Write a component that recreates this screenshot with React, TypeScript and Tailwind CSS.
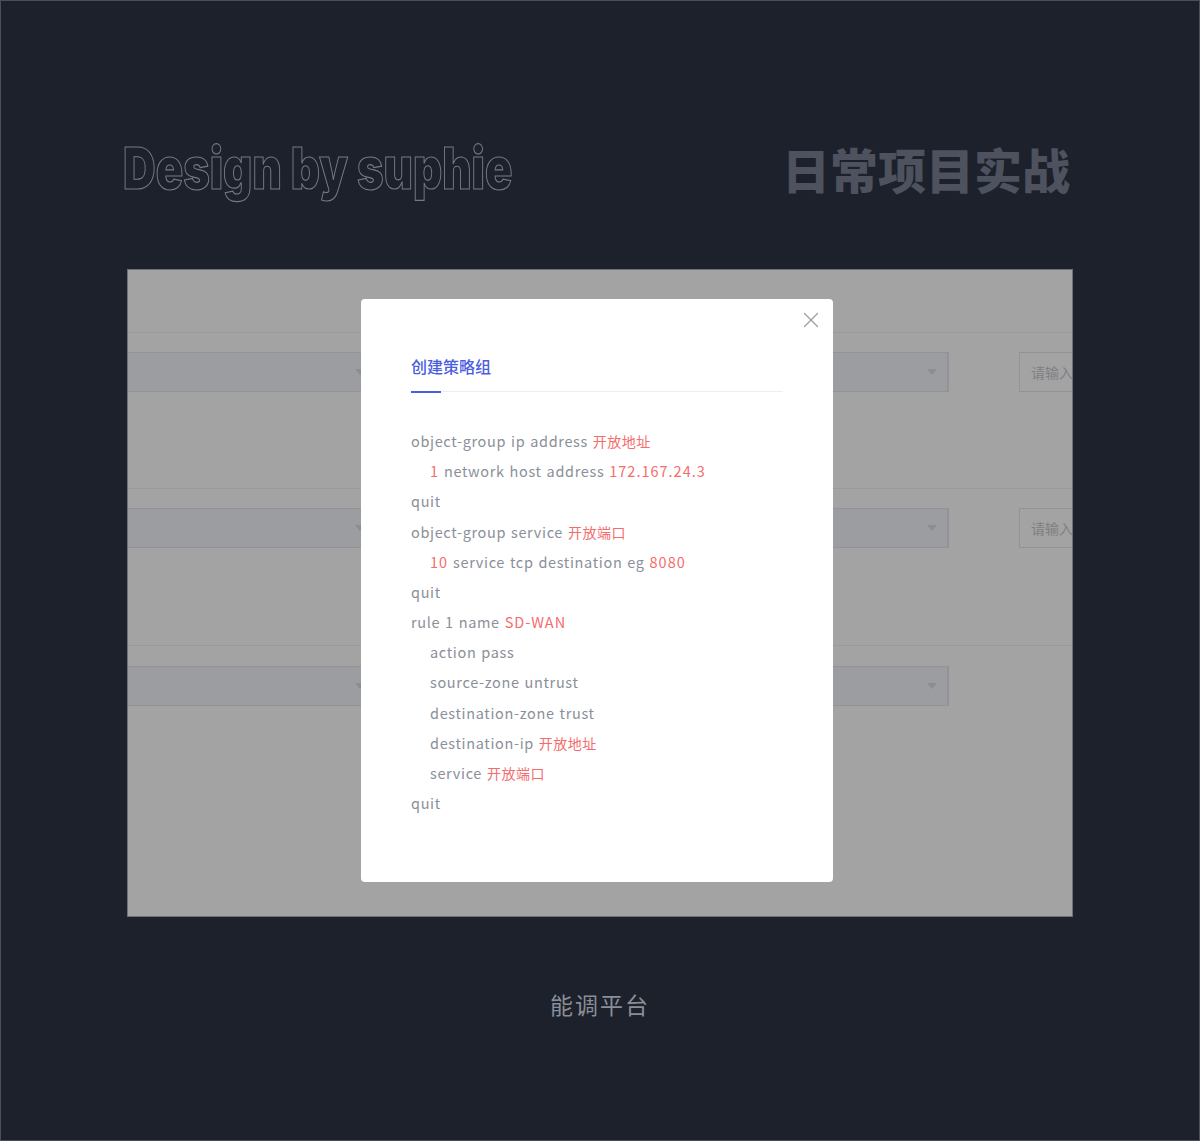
import { X } from 'lucide-react';

const cjk = "font-['Noto_Sans_CJK_SC',sans-serif]";

function Red({ children }: { children: React.ReactNode }) {
  return <span className="text-[#f56c6c] tracking-[1px]">{children}</span>;
}

function RedCn({ children }: { children: React.ReactNode }) {
  return <span className="text-[#f56c6c] text-[14px] tracking-[0.5px]">{children}</span>;
}

function Caret() {
  return <span className="w-0 h-0 border-x-[5px] border-x-transparent border-t-[6px] border-t-[#8b8d91]" />;
}

// one form row behind the overlay
function FormRow({ className, withInput }: { className: string; withInput?: boolean }) {
  return (
    <div className={`border-t border-[#98999d] ${className}`}>
      <div className="flex h-[40px]">
        <div className="w-[240px] border-y border-[#929398] bg-[#9c9da1] flex items-center justify-end pr-[3px]">
          <Caret />
        </div>
        <div className="ml-[334px] w-[247px] border-y border-r-2 border-[#929398] bg-[#9c9da1] flex items-center justify-end pr-[10px]">
          <Caret />
        </div>
        {withInput && (
          <div className="ml-[70px] flex-1 border-y border-l border-[#929398] pl-[11px] flex items-center overflow-hidden">
            <span className={`${cjk} text-[14px] text-[#7f8083] whitespace-nowrap`}>请输入</span>
          </div>
        )}
      </div>
    </div>
  );
}

export default function App() {
  return (
    <div className="h-[1141px] bg-[#1c212b] border border-[#4a4e57] flex flex-col">
      {/* Header */}
      <div className="flex items-center justify-between pl-[122px] pr-[129px] pt-[133px] h-[268px] pb-[68px]">
        <div className="w-[390px]">
          <h1 className="inline-block origin-left scale-x-[0.78] whitespace-nowrap font-['Inter',sans-serif] font-black text-[58px] leading-none text-transparent [-webkit-text-stroke:1.2px_#757982]">
            Design by suphie
          </h1>
        </div>
        <div className={`${cjk} font-black text-[48px] leading-none text-[#4d525e]`}>日常项目实战</div>
      </div>

      {/* Panel */}
      <div className="relative mx-[126px] h-[648px] bg-[#a3a3a3] border border-[#6f7176] overflow-hidden">
        <div className="pt-[62px]">
          <FormRow className="h-[156px] pt-[19px]" withInput />
          <FormRow className="h-[157px] pt-[19px]" withInput />
          <FormRow className="h-[157px] pt-[20px]" />
        </div>

        {/* Modal */}
        <div className="absolute left-[233px] top-[29px] w-[472px] h-[583px] bg-white rounded-[4px] px-[50px] pt-[53px]">
          <X className="absolute right-[9px] top-[8px] text-[#9a9da3]" size={26} strokeWidth={1.1} />
          <div className="border-b border-[#eceef1] h-[40px]">
            <div className={`${cjk} font-medium relative w-fit h-[40px] text-[16px] leading-[28px] text-[#4a5ee0]`}>
              创建策略组
              <span className="absolute left-0 bottom-[-1px] w-[30px] h-[2px] bg-[#4a5ee0]" />
            </div>
          </div>
          <div className={`${cjk} mt-[34px] text-[14.5px] leading-[30.17px] tracking-[0.65px] [word-spacing:1px] text-[#8b8f99]`}>
            <div>object-group ip address <RedCn>开放地址</RedCn></div>
            <div className="pl-[19px]"><Red>1</Red> network host address <Red>172.167.24.3</Red></div>
            <div>quit</div>
            <div>object-group service <RedCn>开放端口</RedCn></div>
            <div className="pl-[19px]"><Red>10</Red> service tcp destination eg <Red>8080</Red></div>
            <div>quit</div>
            <div>rule 1 name <Red>SD-WAN</Red></div>
            <div className="pl-[19px]">action pass</div>
            <div className="pl-[19px]">source-zone untrust</div>
            <div className="pl-[19px]">destination-zone trust</div>
            <div className="pl-[19px]">destination-ip <RedCn>开放地址</RedCn></div>
            <div className="pl-[19px]">service <RedCn>开放端口</RedCn></div>
            <div>quit</div>
          </div>
        </div>
      </div>

      {/* Caption */}
      <div className={`${cjk} mt-[70px] text-center text-[23px] leading-[34px] tracking-[2px] text-[#8a8e98]`}>能调平台</div>
    </div>
  );
}
